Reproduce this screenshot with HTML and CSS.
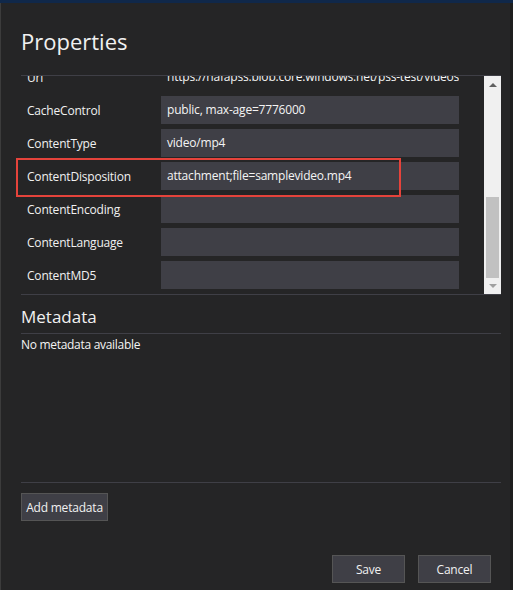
FILE: index.html
```html
<!DOCTYPE html>
<html>
<head>
<meta charset="utf-8">
<link rel="stylesheet" href="styles.css">
</head>
<body>
<div class="topstrip"></div>
<div class="dialog">
  <h1 class="title">Properties</h1>
  <div class="scrollbox">
    <div class="scrollcontent">
      <div class="rows">
        <div class="row"><span class="label">Uri</span><span class="value plain">https://nafapss.blob.core.windows.net/pss-test/videos/samplevideo.mp4</span></div>
        <div class="row"><span class="label">CacheControl</span><span class="value">public, max-age=7776000</span></div>
        <div class="row"><span class="label">ContentType</span><span class="value">video/mp4</span></div>
        <div class="row"><span class="label">ContentDisposition</span><span class="value">attachment;file=samplevideo.mp4</span></div>
        <div class="row"><span class="label">ContentEncoding</span><span class="value"></span></div>
        <div class="row"><span class="label">ContentLanguage</span><span class="value"></span></div>
        <div class="row"><span class="label">ContentMD5</span><span class="value"></span></div>
      </div>
    </div>
    <div class="scrollbar">
      <div class="arrow up"></div>
      <div class="track"><div class="thumb"></div></div>
      <div class="arrow down"></div>
    </div>
  </div>
  <h2 class="section">Metadata</h2>
  <div class="empty">No metadata available</div>
  <div class="spacer"></div>
  <div class="addbar">
    <button class="btn add">Add metadata</button>
  </div>
  <div class="footer">
    <button class="btn action">Save</button>
    <button class="btn action">Cancel</button>
  </div>
  <div class="highlight"></div>
</div>
</body>
</html>
```
FILE: styles.css
```css
html, body {
  margin: 0;
  padding: 0;
  background: #1e1e1e;
}
body {
  width: 513px;
  height: 590px;
  overflow: hidden;
  font-family: "Open Sans", "Noto Sans", sans-serif;
  color: #f1f1f1;
}
.topstrip {
  height: 3px;
  background: #10284a;
}
.dialog {
  position: relative;
  box-sizing: border-box;
  width: 510px;
  height: 587px;
  background: #252526;
  border-left: 1px solid #3c3c3c;
  padding: 0 9px 0 20px;
  display: flex;
  flex-direction: column;
}
.title {
  margin: 22px 0 0 0;
  font-weight: normal;
  font-size: 22px;
  line-height: 32px;
  height: 50px;
  color: #f1f1f1;
}
.scrollbox {
  display: flex;
  height: 218px;
  border-top: 1px solid #3f3f46;
  border-bottom: 1px solid #3f3f46;
}
.scrollcontent {
  flex: 1;
  overflow: hidden;
}
.rows {
  margin-top: -13px;
  display: flex;
  flex-direction: column;
  gap: 5px;
}
.row {
  display: flex;
  align-items: center;
  height: 28px;
}
.label {
  width: 134px;
  padding-left: 6px;
  font-size: 12px;
  letter-spacing: -0.2px;
  color: #f1f1f1;
}
.value {
  box-sizing: border-box;
  width: 298px;
  height: 28px;
  line-height: 28px;
  padding-left: 6px;
  background: #3f3f46;
  font-size: 12px;
  letter-spacing: -0.2px;
  color: #f4f4f4;
  white-space: nowrap;
  overflow: hidden;
}
.value.plain {
  background: transparent;
}
.scrollbar {
  width: 17px;
  background: #f0f0f0;
  display: flex;
  flex-direction: column;
}
.arrow {
  height: 17px;
  display: flex;
  align-items: center;
  justify-content: center;
}
.arrow.up::before {
  content: "";
  border-left: 4px solid transparent;
  border-right: 4px solid transparent;
  border-bottom: 4px solid #606060;
}
.arrow.down::before {
  content: "";
  border-left: 4px solid transparent;
  border-right: 4px solid transparent;
  border-top: 4px solid #a0a0a0;
}
.track {
  flex: 1;
  position: relative;
}
.thumb {
  position: absolute;
  left: 2px;
  right: 2px;
  top: 104px;
  height: 81px;
  background: #c1c1c1;
}
.section {
  margin: 8px 0 0 0;
  font-weight: normal;
  font-size: 17px;
  line-height: 27px;
  padding-bottom: 3px;
  color: #f1f1f1;
  border-bottom: 1px solid #3f3f46;
}
.empty {
  font-size: 12px;
  letter-spacing: -0.3px;
  line-height: 16px;
  margin-top: 3px;
  color: #f4f4f4;
}
.spacer {
  height: 129px;
}
.addbar {
  border-top: 1px solid #3f3f46;
  padding-top: 10px;
}
.btn {
  font-family: "Open Sans", "Noto Sans", sans-serif;
  font-size: 12px;
  letter-spacing: -0.2px;
  color: #f1f1f1;
  background: #3f3f46;
  border: 1px solid #555555;
  padding: 0;
  margin: 0;
}
.add {
  width: 87px;
  height: 28px;
}
.footer {
  display: flex;
  justify-content: flex-end;
  gap: 13px;
  margin-top: 34px;
  padding-right: 10px;
}
.action {
  width: 73px;
  height: 28px;
}
.highlight {
  position: absolute;
  left: 15px;
  top: 155px;
  width: 381px;
  height: 35px;
  border: 2px solid #e5433b;
}
```
